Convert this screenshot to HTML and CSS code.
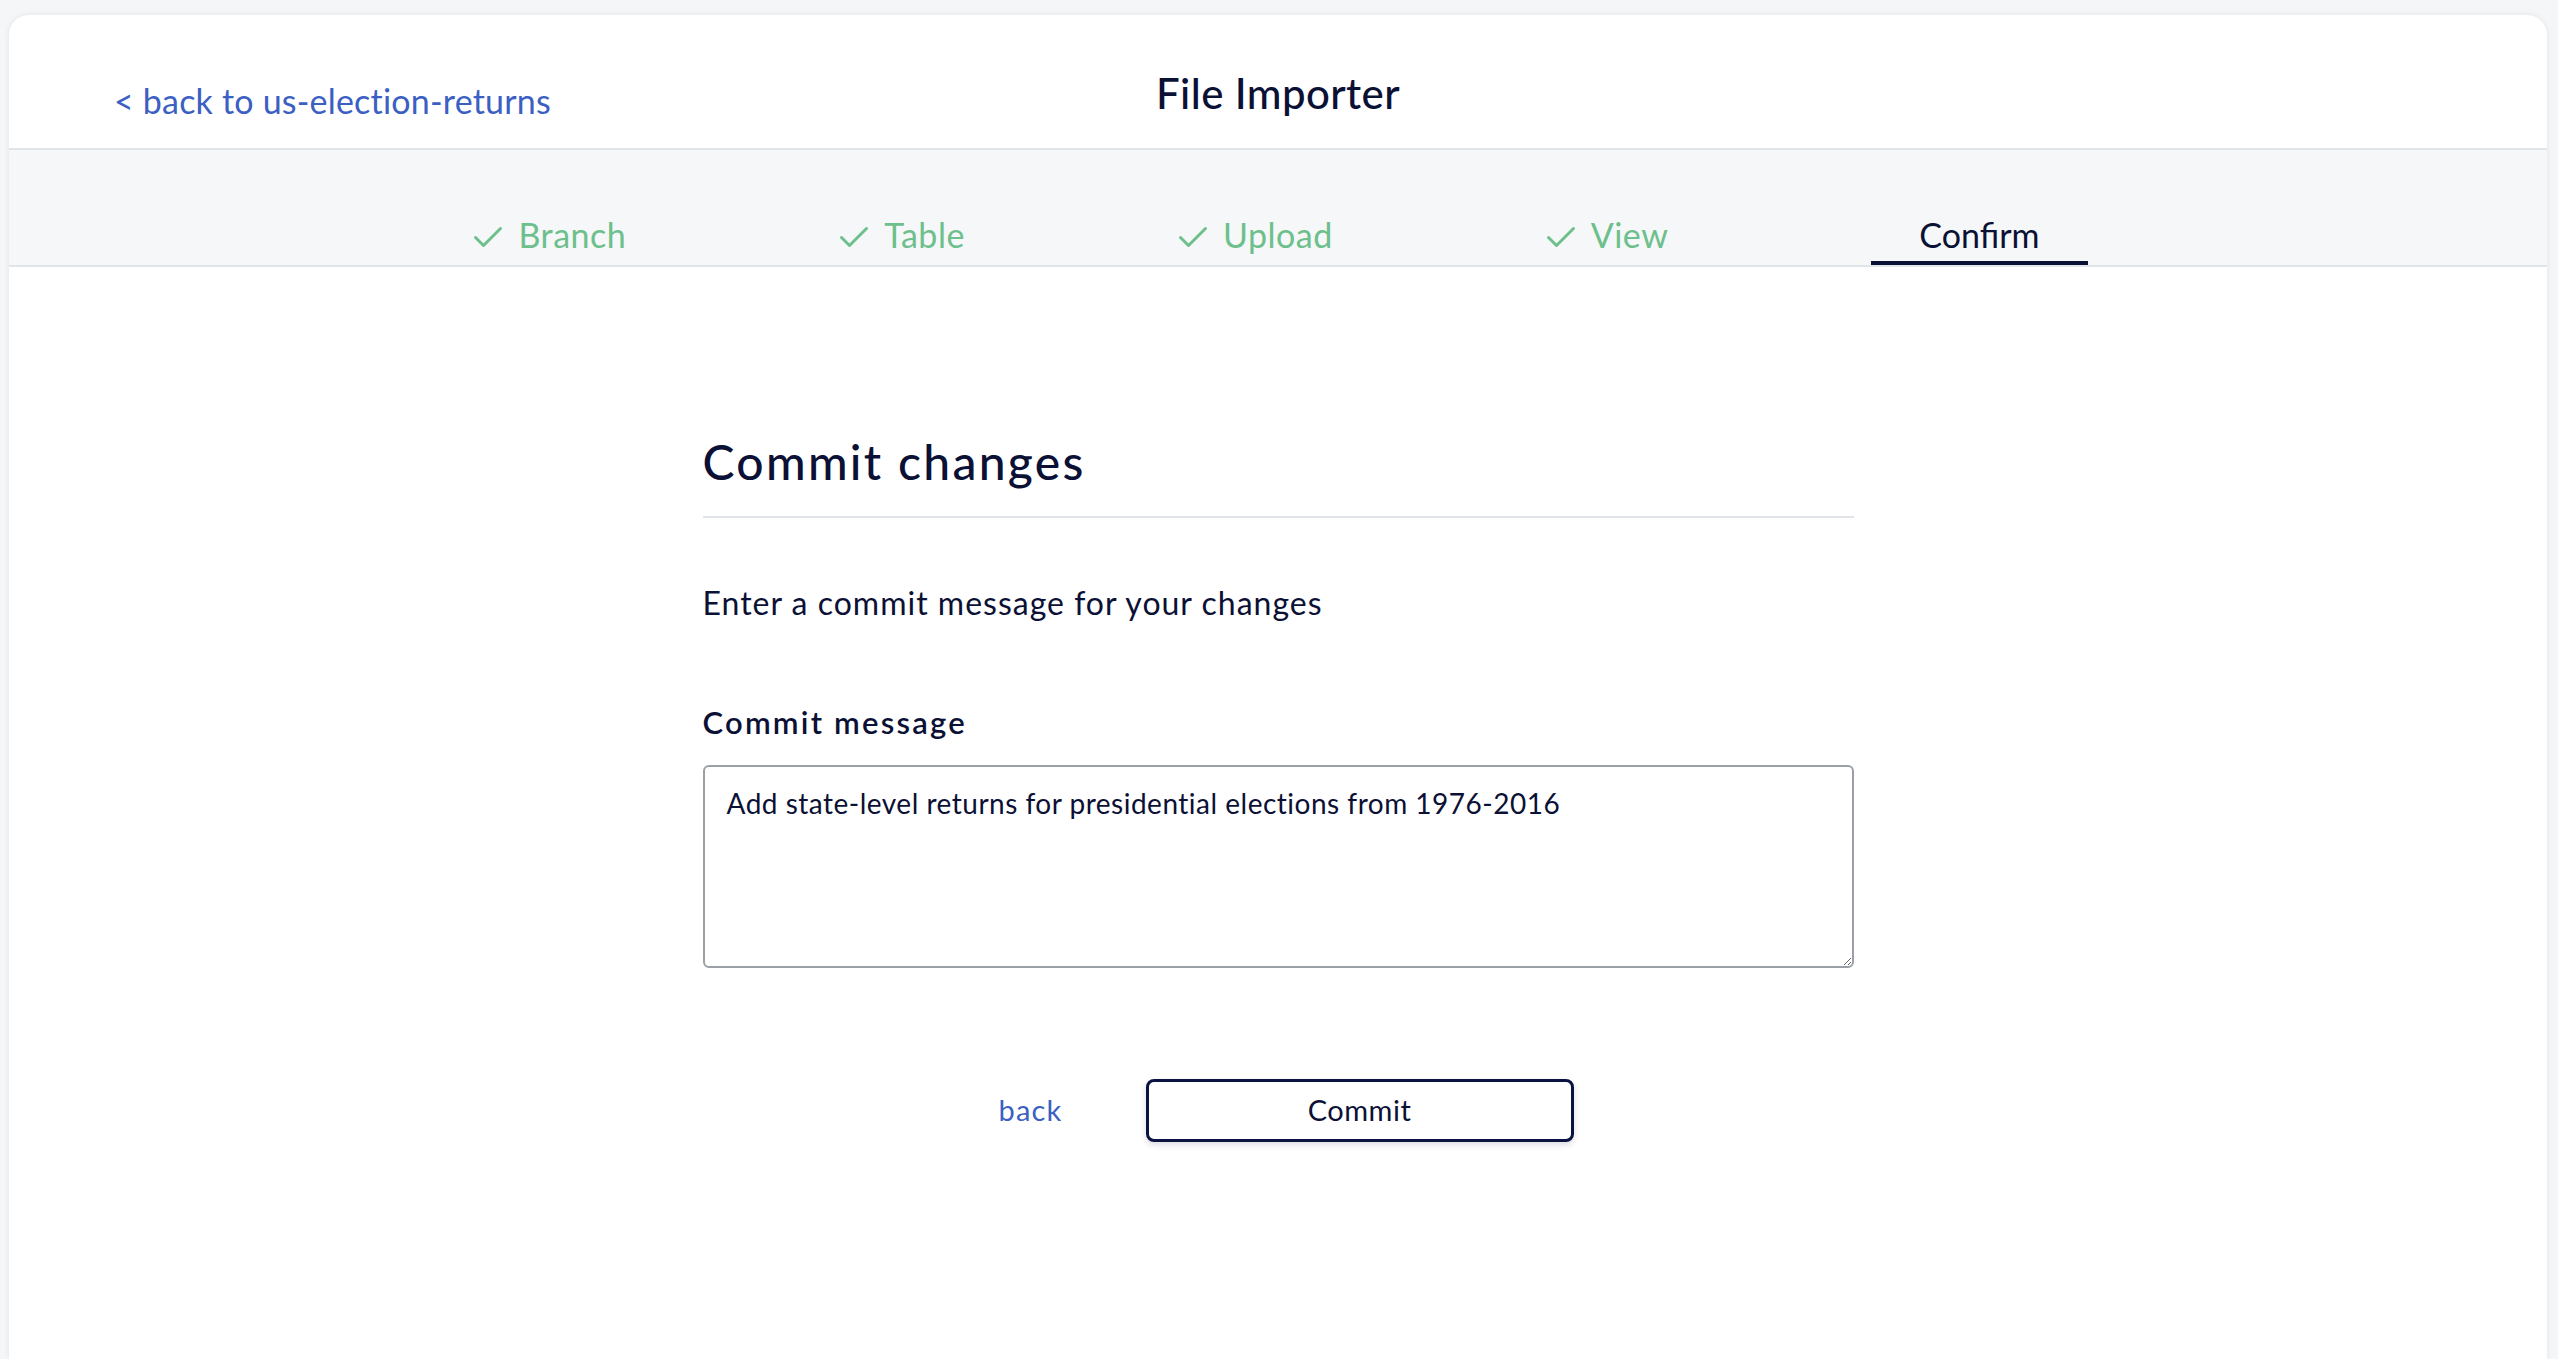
FILE: index.html
```html
<!DOCTYPE html>
<html lang="en">
<head>
<meta charset="utf-8">
<title>File Importer</title>
<link rel="stylesheet" href="styles.css">
</head>
<body>
<div class="card">
  <header class="header">
    <a class="back-link" href="#">&lt; back to us-election-returns</a>
    <h1 class="title">File Importer</h1>
    <span class="spacer"></span>
  </header>
  <nav class="tabs">
    <div class="tab done"><svg class="check" width="30" height="24" viewBox="0 0 30 24"><path d="M2.5 12.5 L10.5 20.5 L27.5 3.5" fill="none" stroke="#6dbf8b" stroke-width="3" stroke-linecap="round" stroke-linejoin="round"/></svg><span>Branch</span></div>
    <div class="tab done"><svg class="check" width="30" height="24" viewBox="0 0 30 24"><path d="M2.5 12.5 L10.5 20.5 L27.5 3.5" fill="none" stroke="#6dbf8b" stroke-width="3" stroke-linecap="round" stroke-linejoin="round"/></svg><span>Table</span></div>
    <div class="tab done"><svg class="check" width="30" height="24" viewBox="0 0 30 24"><path d="M2.5 12.5 L10.5 20.5 L27.5 3.5" fill="none" stroke="#6dbf8b" stroke-width="3" stroke-linecap="round" stroke-linejoin="round"/></svg><span>Upload</span></div>
    <div class="tab done"><svg class="check" width="30" height="24" viewBox="0 0 30 24"><path d="M2.5 12.5 L10.5 20.5 L27.5 3.5" fill="none" stroke="#6dbf8b" stroke-width="3" stroke-linecap="round" stroke-linejoin="round"/></svg><span>View</span></div>
    <div class="tab active"><span>Confirm</span></div>
  </nav>
  <main class="content">
    <h2 class="heading">Commit changes</h2>
    <p class="intro">Enter a commit message for your changes</p>
    <label class="label" for="msg">Commit message</label>
    <textarea id="msg" class="message" autofocus>Add state-level returns for presidential elections from 1976-2016</textarea>
    <div class="actions">
      <a class="back-btn" href="#">back</a>
      <button class="commit-btn" type="button">Commit</button>
    </div>
  </main>
</div>
<script src="script.js"></script>
</body>
</html>
```
FILE: script.js
```js
var t = document.getElementById("msg");
t.focus();
t.setSelectionRange(t.value.length, t.value.length);
```
FILE: styles.css
```css
html, body {
  margin: 0;
  padding: 0;
}
body {
  background: #f5f6f8;
  padding: 15px 11px 0 9px;
  font-family: "Lato", "Open Sans", sans-serif;
  color: #0b1035;
  overflow: hidden;
}
.card {
  background: #ffffff;
  border-radius: 20px 20px 0 0;
  box-shadow: 0 0 6px rgba(20, 30, 60, 0.08);
  min-height: 1344px;
}
.header {
  height: 133px;
  border-bottom: 2px solid #e1e4e8;
  display: grid;
  grid-template-columns: 1fr auto 1fr;
  align-items: start;
  padding: 0 105px;
}
.back-link {
  justify-self: start;
  margin-top: 66px;
  font-size: 34px;
  line-height: 1.2;
  letter-spacing: 0.2px;
  color: #3b5fc2;
  text-decoration: none;
}
.title {
  margin: 53px 0 0;
  font-size: 42px;
  line-height: 1.2;
  font-weight: 500;
  letter-spacing: 0.4px;
  color: #0b1035;
}
.tabs {
  height: 115px;
  background: #f6f7f9;
  border-bottom: 2px solid #e1e4e8;
  display: flex;
  justify-content: center;
  align-items: flex-end;
  gap: 213px;
  padding-left: 5px;
}
.tab {
  display: flex;
  align-items: baseline;
  padding-bottom: 9px;
  font-size: 34px;
  line-height: 1.2;
  letter-spacing: 0.5px;
  color: #6dbf8b;
}
.check {
  margin-right: 15px;
  position: relative;
  top: 1px;
}
.tab.active {
  color: #0b1035;
  letter-spacing: 0;
  margin-left: -10px;
  padding: 0 48px 5px;
  border-bottom: 4px solid #0b1035;
}
.content {
  width: 1151px;
  margin: 0 auto;
  padding-top: 166px;
  display: flex;
  flex-direction: column;
}
.heading {
  margin: 0;
  padding-bottom: 25px;
  border-bottom: 2px solid #e1e4e8;
  font-size: 48px;
  line-height: 1.2;
  font-weight: 500;
  letter-spacing: 2.3px;
  color: #0b1035;
}
.intro {
  margin: 66px 0 0;
  font-size: 32px;
  line-height: 1.2;
  letter-spacing: 1px;
  color: #0b1035;
}
.label {
  margin-top: 82px;
  font-size: 31px;
  line-height: 1.2;
  font-weight: 600;
  letter-spacing: 2.2px;
  color: #0b1035;
}
.message {
  margin-top: 24px;
  box-sizing: border-box;
  width: 100%;
  height: 203px;
  border: 2px solid #9aa0a6;
  border-radius: 6px;
  padding: 20px 22px 17px;
  font-family: "Lato", "Open Sans", sans-serif;
  font-size: 28px;
  line-height: 1.2;
  letter-spacing: 0.5px;
  color: #0b1035;
  caret-color: #0b1035;
  outline: none;
  background: #ffffff;
}
.actions {
  margin-top: 111px;
  display: flex;
  justify-content: center;
  align-items: center;
  gap: 83px;
  padding-left: 16px;
}
.back-btn {
  font-size: 29px;
  line-height: 1.2;
  letter-spacing: 1.2px;
  color: #3b5fc2;
  text-decoration: none;
}
.commit-btn {
  box-sizing: border-box;
  width: 428px;
  height: 63px;
  border: 3px solid #0b1340;
  border-radius: 8px;
  background: #ffffff;
  box-shadow: 0 3px 6px rgba(20, 30, 60, 0.15);
  font-family: "Lato", "Open Sans", sans-serif;
  font-size: 29px;
  line-height: 1.2;
  letter-spacing: 0.5px;
  color: #0b1035;
  cursor: pointer;
}
```
